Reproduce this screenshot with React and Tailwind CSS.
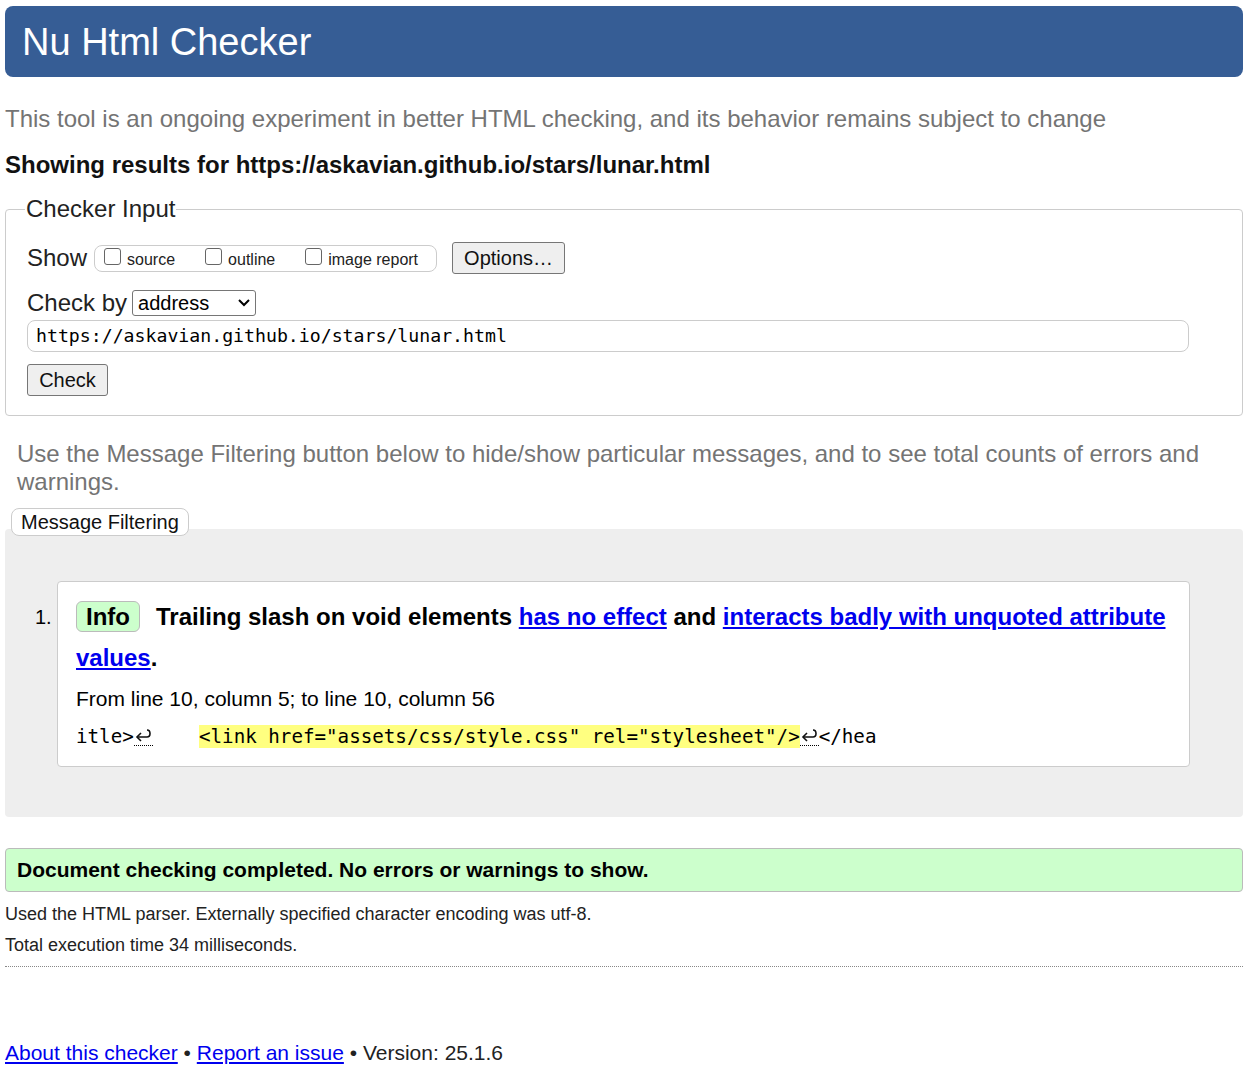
import React from "react";

const sans = "font-['Liberation_Sans',Arial,sans-serif]";
const mono = "font-['DejaVu_Sans_Mono','Liberation_Mono',monospace]";

function ReturnMark() {
  return (
    <span className="inline-block align-baseline border-b border-dotted border-black w-[19px] h-[18px] relative top-[3px]">
      <svg width="19" height="16" viewBox="0 0 19 16" className="absolute left-0 top-0">
        <path d="M13 2 C17 2 17 9 13 9 L3 9" stroke="#111" strokeWidth="1.6" fill="none" />
        <path d="M7 5 L3 9 L7 13" stroke="#111" strokeWidth="1.6" fill="none" />
      </svg>
    </span>
  );
}

function Checkbox({ label, className = "" }) {
  return (
    <label className={`flex items-center text-[16px] text-[#222] ${className}`}>
      <span className="inline-block w-[17px] h-[17px] border border-[#666] rounded-[3px] mr-[6px] -mt-[7px]" />
      {label}
    </label>
  );
}

export default function App() {
  return (
    <div className={`${sans} bg-white text-black min-h-[1069px] pl-[5px] pr-[7px] pt-[6px]`}>
      {/* Header */}
      <div className="bg-[#365d95] rounded-[8px] h-[71px] flex items-center pl-[17px]">
        <h1 className="text-white text-[38px] leading-none">Nu Html Checker</h1>
      </div>

      <p className="text-[#747474] text-[24px] leading-[26px] mt-[29px]">
        This tool is an ongoing experiment in better HTML checking, and its behavior remains subject to change
      </p>
      <p className="font-bold text-[24px] leading-[26px] mt-[20px] text-[#111]">
        Showing results for https://askavian.github.io/stars/lunar.html
      </p>

      {/* Checker input */}
      <fieldset className="border border-[#ccc] rounded-[4px] mt-[17px] px-[21px] pb-[19px] pt-[6px]">
        <legend className="text-[24px] leading-[28px] px-[1px] -ml-[2px] text-[#222]">Checker Input</legend>
        <div className="flex items-center h-[32px] mt-[13px]">
          <span className="text-[24px] text-[#222] mr-[7px]">Show</span>
          <div className="flex items-center border border-[#ccc] rounded-[8px] h-[27px] w-[343px] pl-[9px] pt-[4px]">
            <Checkbox label="source" />
            <Checkbox label="outline" className="ml-[30px]" />
            <Checkbox label="image report" className="ml-[30px]" />
          </div>
          <button className="ml-[15px] h-[32px] w-[113px] bg-[#efefef] border border-[#767676] rounded-[3px] text-[20px] text-[#111]">
            Options…
          </button>
        </div>
        <div className="flex items-center mt-[15px] h-[28px]">
          <span className="text-[24px] text-[#222] mr-[5px]">Check by</span>
          <div className="flex items-center justify-between border border-[#767676] rounded-[3px] h-[26px] w-[124px] pl-[5px] pr-[4px]">
            <span className="text-[20px] leading-none">address</span>
            <svg width="14" height="10" viewBox="0 0 14 10">
              <path d="M2 2 L7 7 L12 2" stroke="#000" strokeWidth="2" fill="none" />
            </svg>
          </div>
        </div>
        <div className={`${mono} mt-[3px] border border-[#ccc] rounded-[8px] h-[32px] flex items-center pl-[8px] text-[18.2px] w-[1162px]`}>
          https://askavian.github.io/stars/lunar.html
        </div>
        <button className="mt-[12px] h-[32px] w-[81px] bg-[#efefef] border border-[#767676] rounded-[3px] text-[20px] text-[#111]">
          Check
        </button>
      </fieldset>

      <p className="text-[#747474] text-[24px] leading-[28px] mt-[24px] px-[12px]">
        Use the Message Filtering button below to hide/show particular messages, and to see total counts of errors and warnings.
      </p>

      {/* Message filtering */}
      <div className="mt-[12px] relative">
        <div className="absolute left-[6px] top-0 z-10 h-[28px] px-[9px] border border-[#ccc] rounded-[8px] bg-white flex items-center text-[20px] text-[#111]">
          Message Filtering
        </div>
        <div className="pt-[21px]">
          <div className="bg-[#eee] rounded-[4px] pt-[52px] pb-[50px] pl-[52px] pr-[53px]">
            <div className="relative bg-white border border-[#ccc] rounded-[4px] pl-[18px] pr-[20px] pt-[14px] pb-[17px]">
              <span className="absolute -left-[23px] top-[20px] text-[20px]">1.</span>
              <div className="font-bold text-[24px] leading-[41px]">
                <span className="inline-block bg-[#ccffcc] border border-[#bbb] rounded-[6px] px-[9px] leading-[29px] mr-[16px]">Info</span>
                Trailing slash on void elements{" "}
                <a className="text-[#0000ee] underline">has no effect</a> and{" "}
                <a className="text-[#0000ee] underline">interacts badly with unquoted attribute values</a>.
              </div>
              <p className="text-[21px] leading-[24px] mt-[9px]">From line 10, column 5; to line 10, column 56</p>
              <p className={`${mono} text-[19.2px] leading-[24px] mt-[14px] whitespace-pre`}>
                itle&gt;<ReturnMark />{"    "}<span className="bg-[#ffff80]">&lt;link href="assets/css/style.css" rel="stylesheet"/&gt;</span><ReturnMark />&lt;/hea
              </p>
            </div>
          </div>
        </div>
      </div>

      {/* Success */}
      <div className="mt-[31px] bg-[#ccffcc] border border-[#bbb] rounded-[4px] h-[44px] flex items-center pl-[11px] font-bold text-[21px]">
        Document checking completed. No errors or warnings to show.
      </div>
      <p className="text-[#222] text-[18px] leading-[20px] mt-[12px]">
        Used the HTML parser. Externally specified character encoding was utf-8.
      </p>
      <p className="text-[#222] text-[18px] leading-[20px] mt-[11px]">
        Total execution time 34 milliseconds.
      </p>
      <hr className="mt-[11px] border-0 border-t border-dotted border-[#888]" />

      <p className="mt-[74px] text-[21px] leading-[24px] text-[#222]">
        <a className="text-[#0000ee] underline">About this checker</a> •{" "}
        <a className="text-[#0000ee] underline">Report an issue</a> • Version: 25.1.6
      </p>
    </div>
  );
}
